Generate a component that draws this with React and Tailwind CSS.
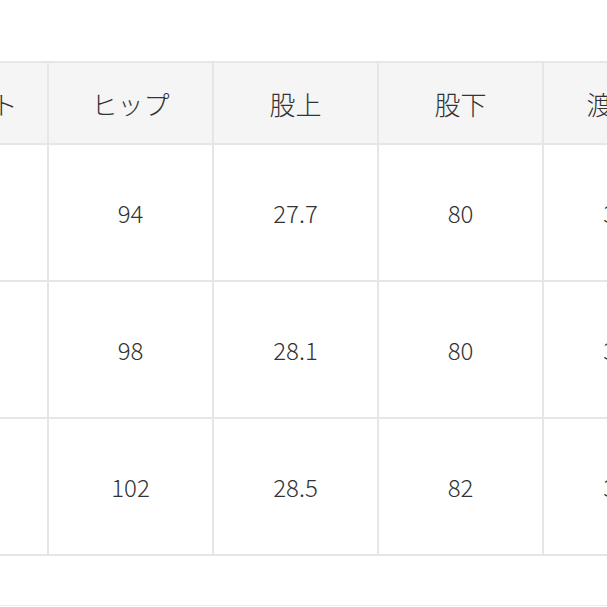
const headers = ["ウエスト", "ヒップ", "股上", "股下", "渡り幅"];

const rows = [
  ["70", "94", "27.7", "80", "31.5"],
  ["74", "98", "28.1", "80", "32.5"],
  ["78", "102", "28.5", "82", "33.5"],
];

const App = () => {
  return (
    <div
      className="w-[607px] h-[607px] overflow-hidden bg-white text-[#333333] font-light"
      style={{ fontFamily: '"Noto Sans CJK JP", "Noto Sans", sans-serif' }}
    >
      <div className="pt-[61px] -ml-[118px]">
        <table className="table-fixed border-collapse w-[825px]">
          <thead>
            <tr>
              {headers.map((h) => (
                <th
                  key={h}
                  className="w-[165px] h-[82px] border-2 border-[#e6e6e6] bg-[#f5f5f5] text-[26px] font-light text-center whitespace-nowrap"
                >
                  {h}
                </th>
              ))}
            </tr>
          </thead>
          <tbody>
            {rows.map((r, i) => (
              <tr key={i}>
                {r.map((v, j) => (
                  <td
                    key={j}
                    className="w-[165px] h-[137px] border-2 border-[#e6e6e6] text-[24px] text-center"
                  >
                    {v}
                  </td>
                ))}
              </tr>
            ))}
          </tbody>
        </table>
      </div>
      <div className="mt-[49px] border-t border-[#ececec]" />
    </div>
  );
};

export default App;
